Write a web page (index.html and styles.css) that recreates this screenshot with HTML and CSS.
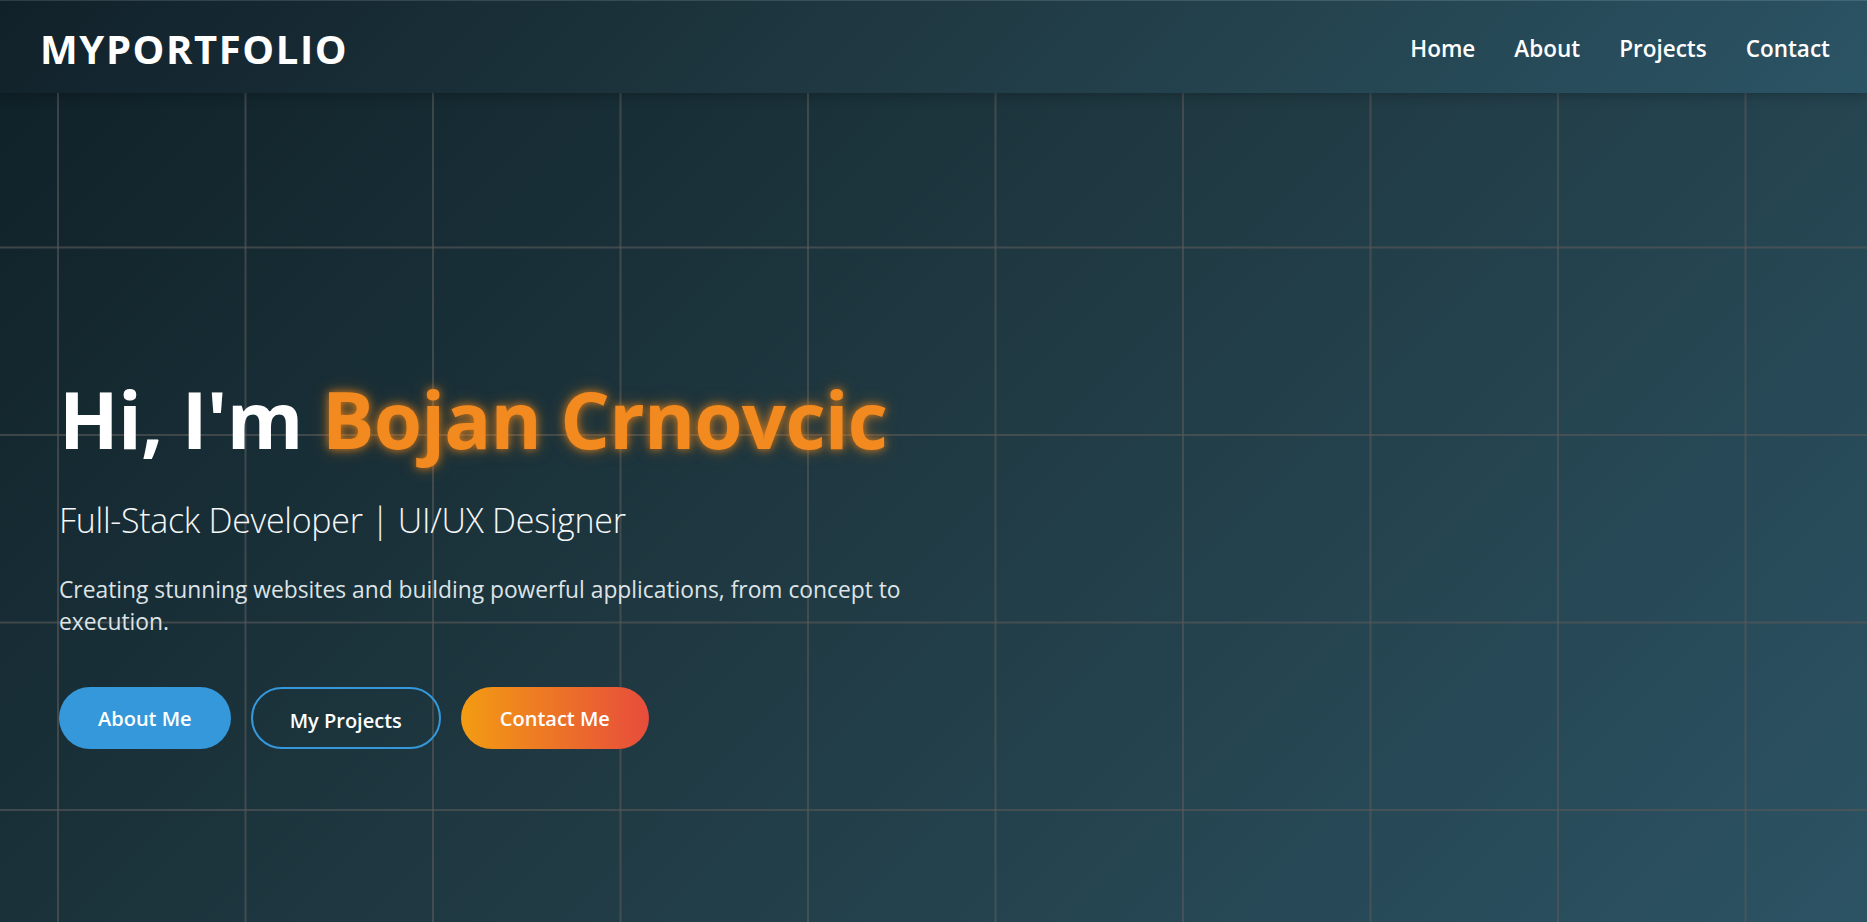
FILE: index.html
```html
<!DOCTYPE html>
<html lang="en">
<head>
<meta charset="utf-8">
<title>MyPortfolio</title>
<link rel="stylesheet" href="styles.css">
</head>
<body>
<div class="page">
  <div class="grid"></div>
  <header class="header">
    <div class="logo">MYPORTFOLIO</div>
    <nav class="nav">
      <a href="#home">Home</a>
      <a href="#about">About</a>
      <a href="#projects">Projects</a>
      <a href="#contact">Contact</a>
    </nav>
  </header>
  <main class="hero">
    <h1 class="hero-title">Hi, I'm <span class="name">Bojan Crnovcic</span></h1>
    <h2 class="hero-subtitle">Full-Stack Developer | UI/UX Designer</h2>
    <p class="hero-text">Creating stunning websites and building powerful applications, from concept to execution.</p>
    <div class="actions">
      <a class="btn btn-primary" href="#about">About Me</a>
      <a class="btn btn-outline" href="#projects">My Projects</a>
      <a class="btn btn-gradient" href="#contact">Contact Me</a>
    </div>
  </main>
</div>
</body>
</html>
```
FILE: styles.css
```css
* { box-sizing: border-box; }
html, body { margin: 0; padding: 0; }
body {
  font-family: "Open Sans", "Noto Sans", "Liberation Sans", sans-serif;
  color: #fff;
  overflow: hidden;
}
.page {
  position: relative;
  width: 100%;
  height: 922px;
  background: linear-gradient(135deg, #0f2027 0%, #203a43 50%, #2c5364 100%);
  overflow: hidden;
}
.grid {
  position: absolute;
  inset: 0;
  background-image:
    linear-gradient(to right, rgba(88, 88, 88, 0.62) 2px, transparent 2px),
    linear-gradient(to bottom, rgba(88, 88, 88, 0.62) 2px, transparent 2px);
  background-size: 187.5px 187.5px;
  background-position: 57px 59px;
  pointer-events: none;
}
.header {
  position: relative;
  z-index: 2;
  height: 93px;
  display: flex;
  align-items: center;
  justify-content: space-between;
  padding: 2px 37px 0 40px;
  background: linear-gradient(135deg, #11212a 0%, #203a43 50%, #2b5465 100%);
  border-top: 1px solid rgba(255, 255, 255, 0.12);
  box-shadow: 0 2px 12px rgba(0, 0, 0, 0.25);
}
.logo {
  font-size: 40px;
  font-weight: 700;
  letter-spacing: 1.6px;
  color: #fff;
}
.nav {
  display: flex;
  gap: 39px;
}
.nav a {
  color: #fff;
  text-decoration: none;
  font-size: 22.5px;
  font-weight: 600;
}
.hero {
  position: relative;
  z-index: 1;
  padding: 279px 0 0 59px;
}
.hero-title {
  margin: 0 0 32px;
  font-size: 78px;
  line-height: 95px;
  font-weight: 700;
  letter-spacing: -0.8px;
  color: #fff;
}
.name {
  color: #f38a20;
  text-shadow: 0 0 8px rgba(255, 140, 20, 0.75), 0 0 18px rgba(255, 140, 20, 0.35);
}
.hero-subtitle {
  margin: 0 0 33px;
  font-size: 34px;
  line-height: 42px;
  font-weight: 300;
  letter-spacing: -0.3px;
  color: #f4f6f7;
}
.hero-text {
  margin: 0 0 49px;
  max-width: 880px;
  font-size: 22.8px;
  line-height: 32px;
  color: #dde3e6;
}
.actions {
  display: flex;
  gap: 20px;
}
.btn {
  display: inline-flex;
  align-items: center;
  justify-content: center;
  height: 62px;
  padding: 0 39px;
  border-radius: 31px;
  font-size: 20px;
  font-weight: 600;
  color: #fff;
  text-decoration: none;
}
.btn-primary { background: #3498db; }
.btn-outline {
  border: 2px solid #3498db;
  padding: 4px 37px 0;
  background: transparent;
}
.btn-gradient { background: linear-gradient(90deg, #f39c12, #e74c3c); }
```
